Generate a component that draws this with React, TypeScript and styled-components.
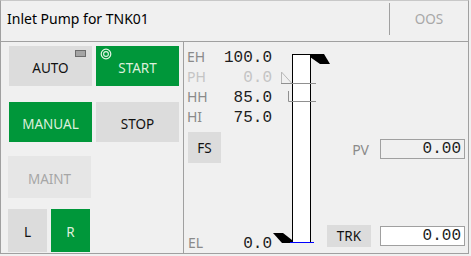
import React from "react";
import styled, { createGlobalStyle } from "styled-components";

const Global = createGlobalStyle`
  html, body { margin: 0; padding: 0; background: #f0f0f0; }
  * { box-sizing: border-box; }
`;

const GREEN = "#00973a";
const LINE = "#a0a0a0";
const UI = `"Noto Sans", "Open Sans", sans-serif`;
const MONO = `"Liberation Mono", "DejaVu Sans Mono", monospace`;

const Frame = styled.div`
  width: 469px;
  height: 254px;
  border: 1px solid ${LINE};
  border-top-color: #c8c8c8;
  background: #f0f0f0;
  display: flex;
  flex-direction: column;
  font-family: ${UI};
`;

const Header = styled.div`
  height: 41px;
  border-bottom: 1px solid ${LINE};
  display: flex;
  align-items: flex-start;
`;

const Title = styled.div`
  padding: 8px 0 0 6px;
  font-size: 14px;
  line-height: 20px;
  color: #000;
`;

const StatusCell = styled.div`
  margin-left: auto;
  margin-top: 2px;
  width: 79px;
  height: 32px;
  border-left: 1px solid ${LINE};
  text-align: center;
  padding-top: 6px;
  font-size: 13.5px;
  line-height: 20px;
  color: #a8a8a8;
`;

const Body = styled.div`
  flex: 1;
  display: flex;
`;

const LeftPanel = styled.div`
  width: 183px;
  border-right: 1px solid ${LINE};
  display: flex;
  flex-direction: column;
`;

const ButtonRow = styled.div<{ $top: number; $left: number; $gap: number }>`
  display: flex;
  gap: ${(p) => p.$gap}px;
  margin-top: ${(p) => p.$top}px;
  padding-left: ${(p) => p.$left}px;
`;

type Tone = "gray" | "green" | "disabled";

const ModeButton = styled.div<{ $tone: Tone; $w: number; $h: number }>`
  position: relative;
  width: ${(p) => p.$w}px;
  height: ${(p) => p.$h}px;
  display: flex;
  align-items: center;
  justify-content: center;
  padding-top: 3px;
  font-size: 13.5px;
  background: ${(p) =>
    p.$tone === "green" ? GREEN : p.$tone === "disabled" ? "#e6e6e6" : "#dcdcdc"};
  color: ${(p) =>
    p.$tone === "green" ? "#dcefdc" : p.$tone === "disabled" ? "#a6a6a6" : "#111"};
`;

const Indicator = styled.div`
  position: absolute;
  top: 4px;
  right: 6px;
  width: 11px;
  height: 7px;
  background: #a4a4a4;
  border: 1px solid #6c6c6c;
`;

const RunIcon = styled.svg`
  position: absolute;
  top: 2px;
  left: 4px;
`;

const Main = styled.div`
  flex: 1;
  display: flex;
`;

const LimitCol = styled.div`
  width: 89px;
  display: flex;
  flex-direction: column;
  padding: 5px 1px 0 3px;
`;

const LimitRow = styled.div`
  height: 20px;
  display: flex;
  justify-content: space-between;
  align-items: baseline;
  line-height: 20px;
`;

const LimitLabel = styled.span<{ $dim?: boolean }>`
  font-size: 14px;
  color: ${(p) => (p.$dim ? "#c4c4c4" : "#8a8a8a")};
`;

const LimitValue = styled.span<{ $dim?: boolean }>`
  font-family: ${MONO};
  font-size: 16px;
  color: ${(p) => (p.$dim ? "#c4c4c4" : "#1c1c1c")};
`;

const SmallButton = styled.div<{ $w: number; $h: number }>`
  width: ${(p) => p.$w}px;
  height: ${(p) => p.$h}px;
  background: #dcdcdc;
  color: #111;
  font-size: 13.5px;
  display: flex;
  align-items: center;
  justify-content: center;
`;

const FsWrap = styled.div`
  margin: 5px 0 0 1px;
`;

const BottomRow = styled(LimitRow)`
  margin-top: auto;
  padding-left: 1px;
`;

const BarSvg = styled.svg`
  flex: none;
  overflow: visible;
`;

const RightCol = styled.div`
  flex: 1;
  display: flex;
  flex-direction: column;
  padding: 97px 3px 6px 0;
`;

const PvRow = styled.div`
  display: flex;
  justify-content: flex-end;
  align-items: center;
  gap: 11px;
`;

const TrkRow = styled.div`
  margin-top: auto;
  display: flex;
  justify-content: space-between;
  align-items: center;
`;

const ValueBox = styled.div<{ $white?: boolean }>`
  width: 85px;
  height: 20px;
  border: 1px solid ${LINE};
  background: ${(p) => (p.$white ? "#fff" : "#f0f0f0")};
  font-family: ${MONO};
  font-size: 16px;
  line-height: 18px;
  text-align: right;
  padding-right: 3px;
  color: #1c1c1c;
`;

const limits = [
  { label: "EH", value: "100.0" },
  { label: "PH", value: "0.0", dim: true },
  { label: "HH", value: "85.0" },
  { label: "HI", value: "75.0" },
];

export default function App() {
  return (
    <>
      <Global />
      <Frame>
        <Header>
          <Title>Inlet Pump for TNK01</Title>
          <StatusCell>OOS</StatusCell>
        </Header>
        <Body>
          <LeftPanel>
            <ButtonRow $top={4} $left={8} $gap={4}>
              <ModeButton $tone="gray" $w={83} $h={40}>
                AUTO
                <Indicator />
              </ModeButton>
              <ModeButton $tone="green" $w={83} $h={40}>
                <RunIcon width="12" height="12" viewBox="0 0 12 12">
                  <circle cx="6" cy="6" r="4.8" fill="none" stroke="#e6f4e6" strokeWidth="1.2" />
                  <circle cx="6" cy="6" r="2.4" fill="none" stroke="#e6f4e6" strokeWidth="1.1" />
                </RunIcon>
                START
              </ModeButton>
            </ButtonRow>
            <ButtonRow $top={16} $left={8} $gap={4}>
              <ModeButton $tone="green" $w={83} $h={40}>
                MANUAL
              </ModeButton>
              <ModeButton $tone="gray" $w={83} $h={40}>
                STOP
              </ModeButton>
            </ButtonRow>
            <ButtonRow $top={14} $left={7} $gap={4}>
              <ModeButton $tone="disabled" $w={83} $h={42}>
                MAINT
              </ModeButton>
            </ButtonRow>
            <ButtonRow $top={11} $left={7} $gap={4}>
              <ModeButton $tone="gray" $w={39} $h={43}>
                L
              </ModeButton>
              <ModeButton $tone="green" $w={39} $h={43}>
                R
              </ModeButton>
            </ButtonRow>
          </LeftPanel>
          <Main>
            <LimitCol>
              {limits.map((l) => (
                <LimitRow key={l.label}>
                  <LimitLabel $dim={l.dim}>{l.label}</LimitLabel>
                  <LimitValue $dim={l.dim}>{l.value}</LimitValue>
                </LimitRow>
              ))}
              <FsWrap>
                <SmallButton $w={33} $h={31}>FS</SmallButton>
              </FsWrap>
              <BottomRow>
                <LimitLabel>EL</LimitLabel>
                <LimitValue>0.0</LimitValue>
              </BottomRow>
            </LimitCol>
            <BarSvg width="54" height="211" viewBox="0 0 54 211">
              <rect x="19.5" y="12.5" width="18" height="188" fill="#fff" stroke="#000" />
              <polygon points="37,12 51,12 57,22 47,22 37,15" fill="#000" />
              <polygon points="0,191 10,191 19,198 19,201 9,201" fill="#000" />
              <line x1="17" y1="200.5" x2="41" y2="200.5" stroke="#0000ff" />
              <polyline points="8.5,30 8.5,41.5 19,41.5 8.5,30" fill="none" stroke="#b8b8b8" />
              <line x1="8" y1="41.5" x2="43" y2="41.5" stroke="#909090" />
              <polyline points="15.5,49 15.5,59.5 43,59.5" fill="none" stroke="#909090" />
            </BarSvg>
            <RightCol>
              <PvRow>
                <LimitLabel>PV</LimitLabel>
                <ValueBox>0.00</ValueBox>
              </PvRow>
              <TrkRow>
                <SmallButton $w={44} $h={22}>TRK</SmallButton>
                <ValueBox $white>0.00</ValueBox>
              </TrkRow>
            </RightCol>
          </Main>
        </Body>
      </Frame>
    </>
  );
}
